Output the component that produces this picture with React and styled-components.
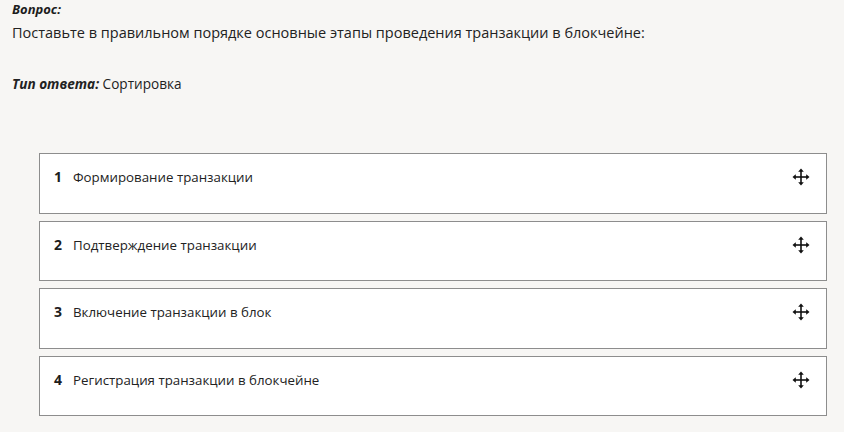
import React from 'react';
import styled, { createGlobalStyle } from 'styled-components';

const GlobalStyle = createGlobalStyle`
  html, body {
    margin: 0;
    padding: 0;
    background: #f7f6f4;
  }
  body {
    font-family: "Open Sans", "Noto Sans", sans-serif;
    color: #222;
  }
`;

const Page = styled.div`
  width: 844px;
  height: 432px;
  overflow: hidden;
  padding: 0 12px;
  box-sizing: border-box;
`;

const Label = styled.div`
  font-size: 13px;
  font-weight: 700;
  font-style: italic;
  line-height: 18px;
  color: #1d1d1d;
`;

const Question = styled.div`
  margin-top: 5px;
  font-size: 14.5px;
  line-height: 20px;
  color: #222;
`;

const AnswerType = styled.div`
  margin-top: 32px;
  font-size: 13.6px;
  line-height: 18px;
  color: #222;

  b {
    font-weight: 700;
    font-style: italic;
  }
`;

const List = styled.div`
  display: flex;
  flex-direction: column;
  gap: 7px;
  margin: 60px 0 0 27px;
  width: 788px;
`;

const Item = styled.div`
  display: flex;
  align-items: flex-start;
  height: 60.5px;
  box-sizing: border-box;
  padding: 13px 14px 0 14px;
  background: #fff;
  border: 1px solid #8d8d8d;
`;

const Num = styled.span`
  width: 19px;
  font-size: 14px;
  font-weight: 700;
  line-height: 20px;
  color: #1d1d1d;
`;

const Text = styled.span`
  flex: 1;
  font-size: 13.3px;
  line-height: 20px;
  color: #222;
`;

const Handle = styled.span`
  display: flex;
  margin-top: 1px;
  margin-right: 2px;
`;

const MoveIcon = () => (
  <svg width="18" height="18" viewBox="0 0 18 18" fill="#111" stroke="#111">
    <line x1="9" y1="2.5" x2="9" y2="15.5" strokeWidth="1.6" />
    <line x1="2.5" y1="9" x2="15.5" y2="9" strokeWidth="1.6" />
    <polygon points="9,0.5 6.2,3.8 11.8,3.8" stroke="none" />
    <polygon points="9,17.5 6.2,14.2 11.8,14.2" stroke="none" />
    <polygon points="0.5,9 3.8,6.2 3.8,11.8" stroke="none" />
    <polygon points="17.5,9 14.2,6.2 14.2,11.8" stroke="none" />
  </svg>
);

const steps = [
  'Формирование транзакции',
  'Подтверждение транзакции',
  'Включение транзакции в блок',
  'Регистрация транзакции в блокчейне',
];

export default function App() {
  return (
    <Page>
      <GlobalStyle />
      <Label>Вопрос:</Label>
      <Question>
        Поставьте в правильном порядке основные этапы проведения транзакции в блокчейне:
      </Question>
      <AnswerType>
        <b>Тип ответа:</b> Сортировка
      </AnswerType>
      <List>
        {steps.map((s, i) => (
          <Item key={s}>
            <Num>{i + 1}</Num>
            <Text>{s}</Text>
            <Handle>
              <MoveIcon />
            </Handle>
          </Item>
        ))}
      </List>
    </Page>
  );
}
